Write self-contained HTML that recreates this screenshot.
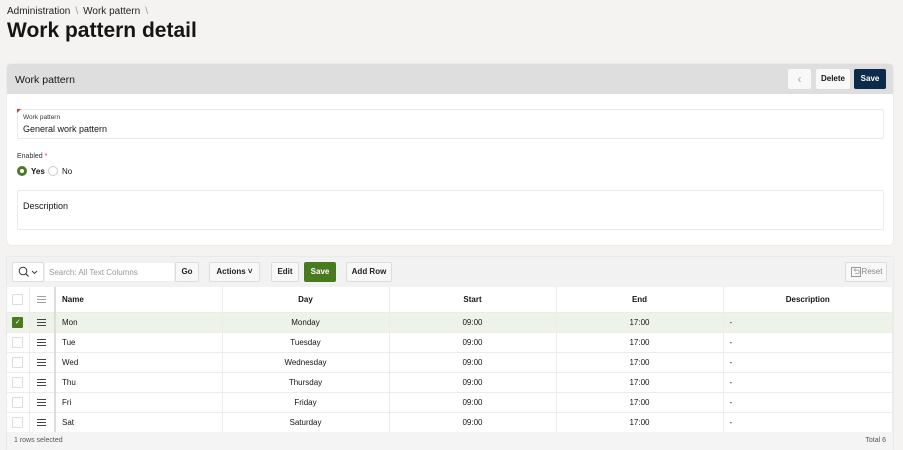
<!DOCTYPE html>
<html><head><style>
*{box-sizing:border-box;margin:0;padding:0}
body{width:903px;height:450px;overflow:hidden;background:#f4f3f2;font-family:"Liberation Sans",sans-serif;color:#161513;position:relative}
.a{position:absolute}
.bc{left:7px;top:6px;font-size:10px;color:#222}
.bc span{color:#999;margin:0 5px}
h1{position:absolute;left:7px;top:19px;font-size:21px;font-weight:bold}
.p1{left:7px;top:64px;width:886px;height:181px;background:#fff;border-radius:4px;box-shadow:0 0 1px rgba(0,0,0,.2)}
.ph{left:0;top:0;width:886px;height:30px;background:#dedede;border-radius:4px 4px 0 0}
.btn{position:absolute;font-size:8px;font-weight:bold;border-radius:2px;text-align:center;line-height:20px;height:20px}
.fld{border:1px solid #ebebeb;border-radius:2px;position:absolute}
.p2{left:7px;top:257px;width:886px;height:193px;background:#fff;box-shadow:0 0 1px rgba(0,0,0,.2)}
.tb{left:0;top:0;width:886px;height:30px;background:#f2f2f2}
.tbtn{position:absolute;top:5px;height:20px;border:1px solid #ddd;background:#f8f8f8;font-size:8px;font-weight:bold;line-height:18px;text-align:center;border-radius:2px;color:#222}
table{position:absolute;left:0;top:30px;border-collapse:collapse;width:886px;font-size:8px}
td,th{border-bottom:1px solid #ececec;border-right:1px solid #ececec;height:20px}
th{height:25px;font-weight:bold}
.c{text-align:center}.l{text-align:left;padding-left:6px}
.cb{display:inline-block;width:11px;height:11px;border:1px solid #ddd;border-radius:1px;vertical-align:middle}
.hm{display:inline-block;width:9px;height:7px;border-top:1px solid #444;border-bottom:1px solid #444;position:relative;vertical-align:middle}
.hm:after{content:"";position:absolute;left:0;right:0;top:2px;height:1px;background:#444}
.sel td{background:#eef3ea}
</style></head><body>
<div class="a bc">Administration<span>\</span>Work pattern<span>\</span></div>
<h1>Work pattern detail</h1>
<div class="a p1">
 <div class="a ph"><div class="a" style="left:8px;top:10px;font-size:10.5px">Work pattern</div>
  <div class="btn" style="left:781px;top:5px;width:23px;background:#f8f8f8;color:#aaa;font-weight:normal;font-size:12px">‹</div>
  <div class="btn" style="left:809px;top:5px;width:34px;background:#f8f8f8">Delete</div>
  <div class="btn" style="left:847px;top:5px;width:32px;background:#0c2a4a;color:#fff">Save</div>
 </div>
 <div class="fld" style="left:10px;top:45px;width:867px;height:30px">
  <div class="a" style="left:-1px;top:-1px;width:0;height:0;border-top:4px solid #d33;border-right:4px solid transparent"></div>
  <div class="a" style="left:5px;top:4px;font-size:6.5px;color:#333">Work pattern</div>
  <div class="a" style="left:5px;top:14px;font-size:9px">General work pattern</div>
 </div>
 <div class="a" style="left:10px;top:89px;font-size:7px;color:#333">Enabled <span style="color:#d33">*</span></div>
 <div class="a" style="left:10px;top:102px;width:10px;height:10px;border-radius:50%;border:3px solid #4a7a2a;background:#fff"></div>
 <div class="a" style="left:24px;top:103px;font-size:8px;font-weight:bold">Yes</div>
 <div class="a" style="left:41px;top:102px;width:10px;height:10px;border-radius:50%;border:1px solid #ccc"></div>
 <div class="a" style="left:55px;top:103px;font-size:8px">No</div>
 <div class="fld" style="left:10px;top:126px;width:867px;height:40px"><div class="a" style="left:5px;top:10px;font-size:9px">Description</div></div>
</div>
<div class="a p2">
 <div class="a tb">
  <div class="tbtn" style="left:5px;width:32px;background:#fff">
   <svg width="30" height="18" viewBox="0 0 30 18" style="position:absolute;left:0;top:0"><circle cx="10" cy="8" r="3.8" fill="none" stroke="#333" stroke-width="1"/><path d="M12.7 10.7L15.5 13.5" stroke="#333" stroke-width="1.2"/><path d="M19 8l2.5 2.5L24 8" fill="none" stroke="#333" stroke-width="0.9"/></svg>
  </div>
  <div class="a" style="left:37px;top:5px;width:131px;height:20px;background:#fff;border:1px solid #eee;font-size:8px;color:#999;padding:5px 4px">Search: All Text Columns</div>
  <div class="tbtn" style="left:168px;width:24px">Go</div>
  <div class="tbtn" style="left:202px;width:51px">Actions ˅</div>
  <div class="tbtn" style="left:264px;width:28px">Edit</div>
  <div class="tbtn" style="left:297px;width:32px;background:#4a7a1e;color:#fff;border-color:#4a7a1e">Save</div>
  <div class="tbtn" style="left:339px;width:46px">Add Row</div>
  <div class="tbtn" style="left:838px;width:42px;color:#888;font-weight:normal;padding-left:12px">
   <svg width="10" height="10" viewBox="0 0 10 10" style="position:absolute;left:5px;top:4px"><rect x="0.5" y="0.5" width="9" height="9" fill="none" stroke="#999"/><path d="M3 3h3.5a1.8 1.8 0 010 3.6H4M3 3l1.5-1.3M3 3l1.5 1.3" fill="none" stroke="#999" stroke-width="0.8"/></svg>Reset</div>
 </div>
 <table>
  <tr><th class="c" style="width:22px;background:#fff"><span class="cb"></span></th><th class="c" style="width:26px;border-right:2px solid #ddd"><span class="hm" style="opacity:.5"></span></th><th class="l" style="width:167px">Name</th><th style="width:167px">Day</th><th style="width:167px">Start</th><th style="width:167px">End</th><th>Description</th></tr>
  <tr class="sel"><td class="c"><span class="cb" style="background:#4a7a1e;border-color:#4a7a1e;color:#fff;font-size:7px;line-height:9px">✓</span></td><td class="c" style="border-right:2px solid #ddd"><span class="hm"></span></td><td class="l">Mon</td><td class="c">Monday</td><td class="c">09:00</td><td class="c">17:00</td><td class="l">-</td></tr>
  <tr><td class="c"><span class="cb"></span></td><td class="c" style="border-right:2px solid #ddd"><span class="hm"></span></td><td class="l">Tue</td><td class="c">Tuesday</td><td class="c">09:00</td><td class="c">17:00</td><td class="l">-</td></tr>
  <tr><td class="c"><span class="cb"></span></td><td class="c" style="border-right:2px solid #ddd"><span class="hm"></span></td><td class="l">Wed</td><td class="c">Wednesday</td><td class="c">09:00</td><td class="c">17:00</td><td class="l">-</td></tr>
  <tr><td class="c"><span class="cb"></span></td><td class="c" style="border-right:2px solid #ddd"><span class="hm"></span></td><td class="l">Thu</td><td class="c">Thursday</td><td class="c">09:00</td><td class="c">17:00</td><td class="l">-</td></tr>
  <tr><td class="c"><span class="cb"></span></td><td class="c" style="border-right:2px solid #ddd"><span class="hm"></span></td><td class="l">Fri</td><td class="c">Friday</td><td class="c">09:00</td><td class="c">17:00</td><td class="l">-</td></tr>
  <tr><td class="c"><span class="cb"></span></td><td class="c" style="border-right:2px solid #ddd"><span class="hm"></span></td><td class="l">Sat</td><td class="c">Saturday</td><td class="c">09:00</td><td class="c">17:00</td><td class="l">-</td></tr>
 </table>
 <div class="a" style="left:0;top:175px;width:886px;height:18px;background:#f4f4f4;font-size:7px;color:#555;padding:5px 7px">1 rows selected<span style="float:right">Total 6</span></div>
</div>
</body></html>
